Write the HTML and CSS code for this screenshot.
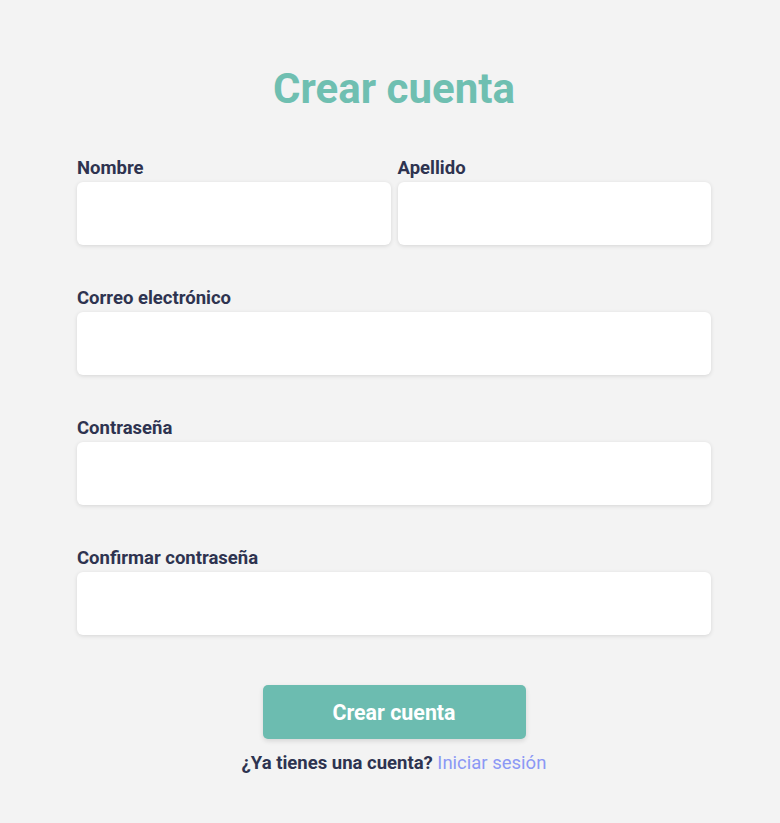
FILE: index.html
```html
<!DOCTYPE html>
<html lang="es">
<head>
<meta charset="utf-8">
<title>Crear cuenta</title>
<link rel="stylesheet" href="styles.css">
</head>
<body>
<main class="page">
  <h1 class="title">Crear cuenta</h1>
  <form class="form">
    <div class="row two">
      <div class="field">
        <label class="label">Nombre</label>
        <input class="input" type="text">
      </div>
      <div class="field">
        <label class="label">Apellido</label>
        <input class="input" type="text">
      </div>
    </div>
    <div class="row">
      <div class="field">
        <label class="label">Correo electrónico</label>
        <input class="input" type="email">
      </div>
    </div>
    <div class="row">
      <div class="field">
        <label class="label">Contraseña</label>
        <input class="input" type="password">
      </div>
    </div>
    <div class="row">
      <div class="field">
        <label class="label">Confirmar contraseña</label>
        <input class="input" type="password">
      </div>
    </div>
    <div class="actions">
      <button class="btn" type="button">Crear cuenta</button>
      <p class="footer">¿Ya tienes una cuenta? <a class="link" href="#">Iniciar sesión</a></p>
    </div>
  </form>
</main>
</body>
</html>
```
FILE: styles.css
```css
html, body {
  margin: 0;
  padding: 0;
  background: #f3f3f3;
  font-family: Roboto, "Liberation Sans", sans-serif;
}
.page {
  width: 634px;
  margin-left: 77px;
  padding-top: 64px;
}
.title {
  margin: 0;
  text-align: center;
  font-size: 42px;
  font-weight: 700;
  color: #6fbfb1;
  line-height: 50px;
}
.form {
  margin-top: 43px;
  display: flex;
  flex-direction: column;
}
.row {
  display: flex;
  margin-bottom: 42px;
}
.row.two {
  gap: 7px;
}
.field {
  flex: 1;
  display: flex;
  flex-direction: column;
}
.label {
  font-size: 18.5px;
  font-weight: 700;
  color: #2e3350;
  line-height: 22px;
  margin-bottom: 3px;
}
.input {
  height: 63px;
  box-sizing: border-box;
  border: none;
  border-radius: 6px;
  background: #fff;
  box-shadow: 0 1px 4px rgba(0,0,0,0.12);
  outline: none;
  font-family: inherit;
}
.actions {
  display: flex;
  flex-direction: column;
  align-items: center;
  margin-top: 8px;
}
.btn {
  width: 263px;
  height: 54px;
  border: none;
  border-radius: 5px;
  background: #6cbcb0;
  color: #fff;
  font-family: inherit;
  font-size: 21.4px;
  font-weight: 700;
  box-shadow: 0 2px 5px rgba(0,0,0,0.12);
}
.footer {
  margin: 13px 0 0;
  font-size: 18.5px;
  font-weight: 700;
  color: #2e3350;
}
.link {
  color: #8b98f5;
  font-weight: 400;
  text-decoration: none;
}
```
